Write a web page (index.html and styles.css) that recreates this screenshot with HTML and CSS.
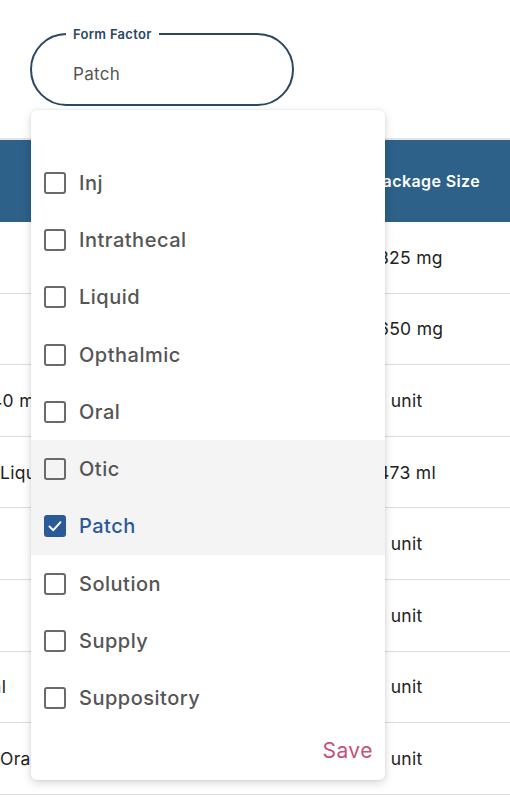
FILE: index.html
```html
<!DOCTYPE html>
<html lang="en">
<head>
<meta charset="utf-8">
<title>Form Factor filter</title>
<link rel="stylesheet" href="styles.css">
</head>
<body>
<div class="page">
  <div class="filter">
    <div class="field">
      <span class="field-label">Form Factor</span>
      <span class="field-value">Patch</span>
    </div>
  </div>

  <div class="table">
    <div class="row head">
      <div class="cell left"></div>
      <div class="cell right">Package Size</div>
    </div>
    <div class="row"><div class="cell left"></div><div class="cell right">325 mg</div></div>
    <div class="row"><div class="cell left"></div><div class="cell right">650 mg</div></div>
    <div class="row"><div class="cell left"><span class="shift-a">40 mg</span></div><div class="cell right">1 unit</div></div>
    <div class="row"><div class="cell left">Liquid</div><div class="cell right">473 ml</div></div>
    <div class="row"><div class="cell left"></div><div class="cell right">1 unit</div></div>
    <div class="row"><div class="cell left"></div><div class="cell right">1 unit</div></div>
    <div class="row"><div class="cell left"><span class="shift-b">Oral</span></div><div class="cell right">1 unit</div></div>
    <div class="row"><div class="cell left">Oral</div><div class="cell right">1 unit</div></div>
  </div>

  <div class="menu">
    <ul class="options">
      <li class="option"><span class="box"></span><span class="opt-text">Inj</span></li>
      <li class="option"><span class="box"></span><span class="opt-text">Intrathecal</span></li>
      <li class="option"><span class="box"></span><span class="opt-text">Liquid</span></li>
      <li class="option"><span class="box"></span><span class="opt-text">Opthalmic</span></li>
      <li class="option"><span class="box"></span><span class="opt-text">Oral</span></li>
      <li class="option hover"><span class="box"></span><span class="opt-text">Otic</span></li>
      <li class="option selected"><span class="box checked"><svg viewBox="0 0 22 22" width="22" height="22"><polyline points="5.5,11.5 9.3,15.2 16.5,7.2" fill="none" stroke="#fff" stroke-width="2" stroke-linecap="round" stroke-linejoin="round"/></svg></span><span class="opt-text">Patch</span></li>
      <li class="option"><span class="box"></span><span class="opt-text">Solution</span></li>
      <li class="option"><span class="box"></span><span class="opt-text">Supply</span></li>
      <li class="option"><span class="box"></span><span class="opt-text">Suppository</span></li>
    </ul>
    <div class="menu-foot"><button class="save">Save</button></div>
  </div>
</div>
</body>
</html>
```

FILE: styles.css
```css
html, body {
  margin: 0;
  padding: 0;
  background: #fff;
}
body {
  font-family: "Inter", "Liberation Sans", sans-serif;
  width: 510px;
  height: 803px;
  overflow: hidden;
}
.page {
  position: relative;
  width: 510px;
  height: 803px;
  overflow: hidden;
}

/* form field */
.filter {
  padding: 33px 0 0 30px;
}
.field {
  position: relative;
  box-sizing: border-box;
  width: 264px;
  height: 73px;
  border: 2px solid #2b4763;
  border-radius: 37px;
  display: flex;
  align-items: center;
  padding: 9px 0 0 41px;
}
.field-label {
  position: absolute;
  top: -9px;
  left: 34px;
  padding: 0 7px;
  background: #fff;
  font-size: 13px;
  line-height: 16px;
  letter-spacing: 0.3px;
  font-weight: 600;
  color: #2b4763;
}
.field-value {
  font-size: 17px;
  letter-spacing: 0.3px;
  color: #555;
}

/* table */
.table {
  margin-top: 32px;
  border-top: 2px solid #e4e4e4;
}
.row {
  display: grid;
  grid-template-columns: 372px 1fr;
  height: 71.6px;
  box-sizing: border-box;
  border-bottom: 1.5px solid #dcdcdc;
  align-items: center;
  font-size: 17.5px;
  letter-spacing: 0.3px;
  color: #222;
}
.row.head {
  height: 82px;
  background: #2d6189;
  border-bottom: none;
  color: #fff;
  font-weight: 600;
  font-size: 16px;
  letter-spacing: 0.4px;
}
.cell {
  white-space: nowrap;
  overflow: hidden;
}
.row .right {
  padding-left: 6px;
}
.row.head .right {
  padding-left: 0;
}
.shift-a {
  margin-left: -9px;
}
.shift-b {
  margin-left: -29px;
}

/* dropdown */
.menu {
  position: absolute;
  left: 31px;
  top: 110px;
  width: 354px;
  height: 670px;
  background: #fff;
  border-radius: 6px;
  box-shadow: 0 3px 10px rgba(0, 0, 0, 0.16), 0 0 3px rgba(0, 0, 0, 0.08);
  display: flex;
  flex-direction: column;
}
.options {
  list-style: none;
  margin: 0;
  padding: 44px 0 0;
}
.option {
  height: 57.3px;
  display: flex;
  align-items: center;
  gap: 13px;
  padding-left: 13px;
  font-size: 20px;
  letter-spacing: 0.5px;
  font-weight: 500;
  color: #555;
}
.option.hover,
.option.selected {
  background: #f4f4f4;
}
.option.selected {
  color: #2a5a97;
}
.box {
  box-sizing: border-box;
  width: 22px;
  height: 22px;
  border: 2px solid #6a6a6a;
  border-radius: 3px;
  flex: none;
  display: flex;
}
.box.checked {
  background: #2a5a97;
  border: none;
}
.box svg {
  display: block;
}
.menu-foot {
  margin-top: auto;
  display: flex;
  justify-content: flex-end;
  padding: 0 12px 17px 0;
}
.save {
  border: none;
  background: none;
  padding: 0;
  font-family: inherit;
  font-size: 21px;
  letter-spacing: 0.5px;
  line-height: 24px;
  color: #c9507b;
}
```
